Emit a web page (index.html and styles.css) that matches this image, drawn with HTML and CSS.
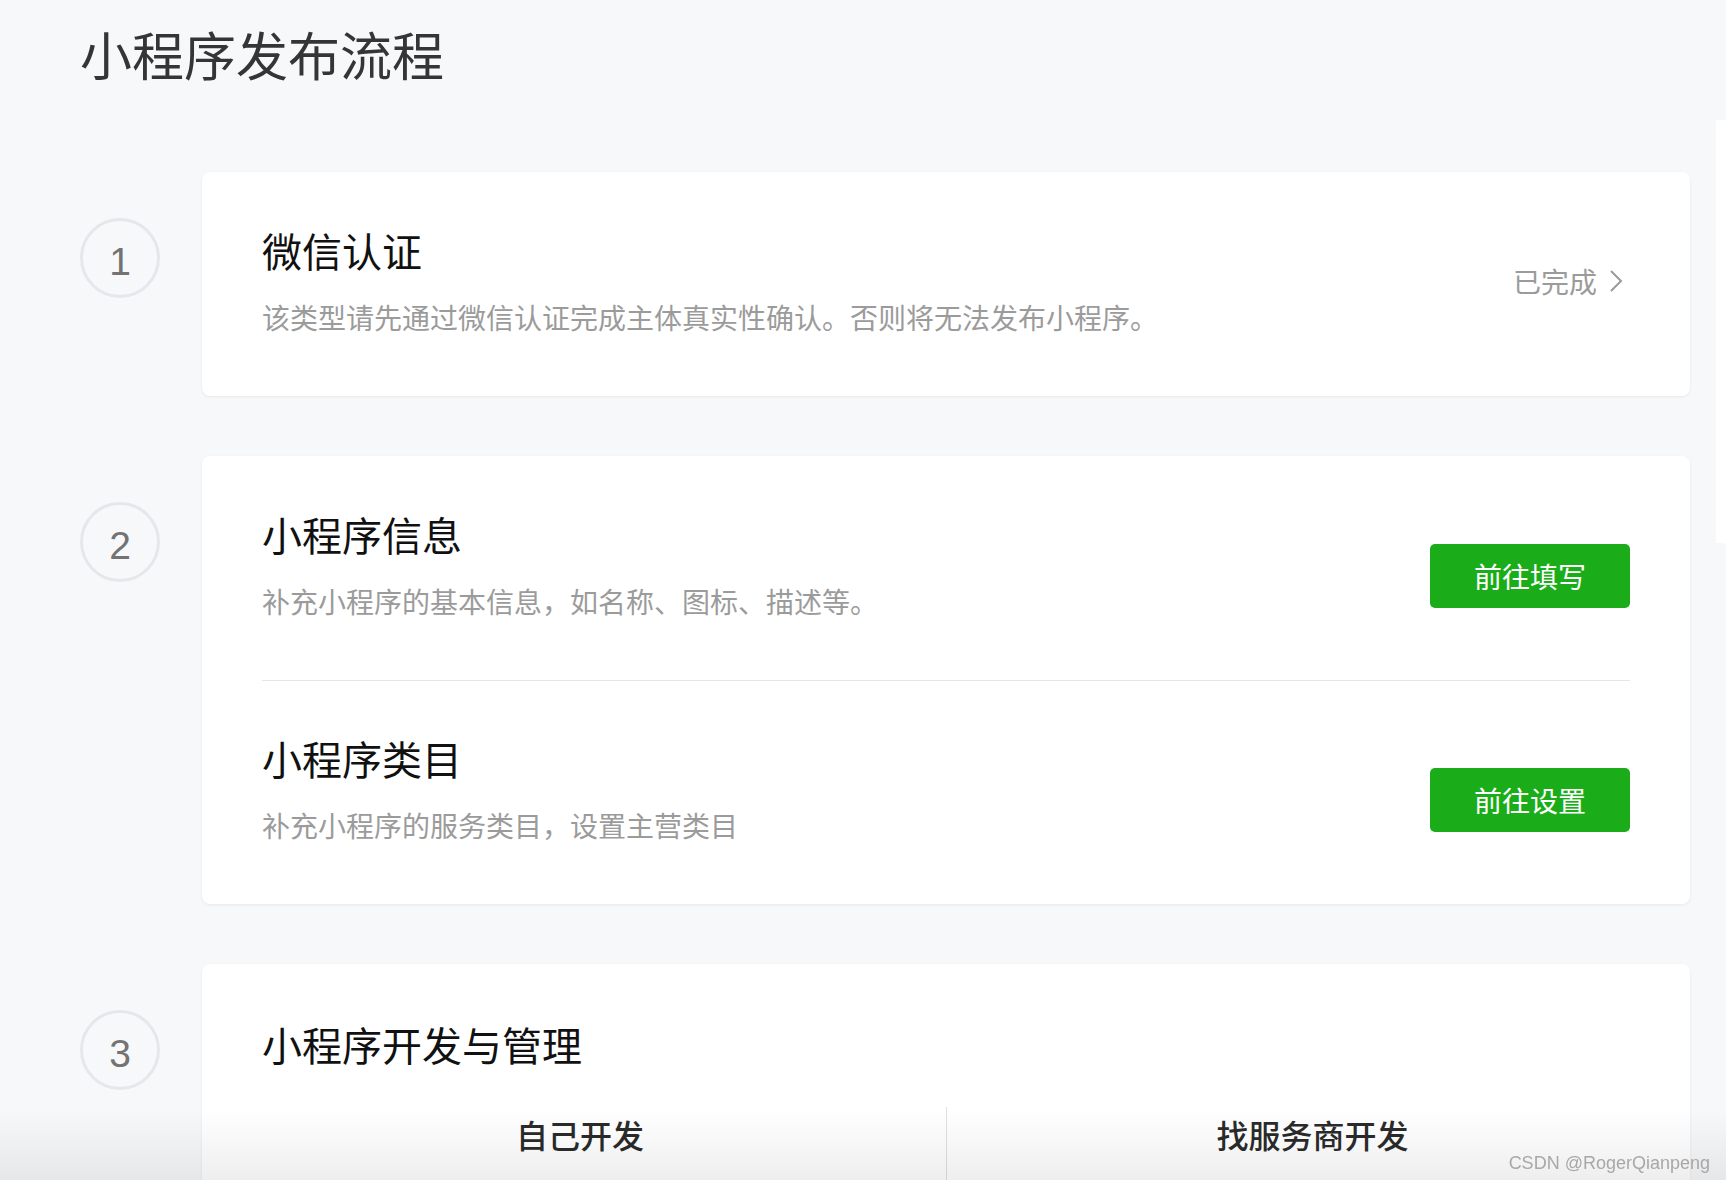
FILE: index.html
```html
<!DOCTYPE html>
<html lang="zh-CN">
<head>
<meta charset="utf-8">
<title>小程序发布流程</title>
<link rel="stylesheet" href="styles.css">
</head>
<body>
<div class="layout">
  <main class="page">
    <h1 class="page-title">小程序发布流程</h1>
    <ol class="steps">
      <li class="step">
        <div class="step-num">1</div>
        <div class="card">
          <div class="section">
            <div class="section-text">
              <h2 class="section-title">微信认证</h2>
              <p class="section-desc">该类型请先通过微信认证完成主体真实性确认。否则将无法发布小程序。</p>
            </div>
            <a class="status-link" href="#">已完成<svg class="chevron" width="14" height="24" viewBox="0 0 14 24"><path d="M2 2 L12 12 L2 22" fill="none" stroke="#9b9b9b" stroke-width="2"/></svg></a>
          </div>
        </div>
      </li>
      <li class="step">
        <div class="step-num">2</div>
        <div class="card">
          <div class="section">
            <div class="section-text">
              <h2 class="section-title">小程序信息</h2>
              <p class="section-desc">补充小程序的基本信息，如名称、图标、描述等。</p>
            </div>
            <a class="btn" href="#">前往填写</a>
          </div>
          <div class="section">
            <div class="section-text">
              <h2 class="section-title">小程序类目</h2>
              <p class="section-desc">补充小程序的服务类目，设置主营类目</p>
            </div>
            <a class="btn" href="#">前往设置</a>
          </div>
        </div>
      </li>
      <li class="step">
        <div class="step-num">3</div>
        <div class="card card-dev">
          <h2 class="section-title">小程序开发与管理</h2>
          <div class="dev-options">
            <div class="dev-option">自己开发</div>
            <div class="dev-option">找服务商开发</div>
          </div>
        </div>
      </li>
    </ol>
  </main>
  <aside class="side-strip"></aside>
</div>
<div class="bottom-fade"></div>
<div class="watermark">CSDN @RogerQianpeng</div>
</body>
</html>
```
FILE: styles.css
```css
html, body {
  margin: 0;
  height: 100%;
  overflow: hidden;
}

body {
  background: #f7f8fa;
  font-family: "Noto Sans CJK SC", "Noto Sans", sans-serif;
}

.layout {
  display: flex;
  align-items: flex-start;
}

.page {
  flex: 1;
  min-width: 0;
  padding: 18px 26px 0 80px;
}

.side-strip {
  flex: none;
  width: 10px;
  height: 423px;
  margin-top: 120px;
  background: #ffffff;
}

.page-title {
  margin: 0 0 82px;
  font-size: 52px;
  line-height: 72px;
  font-weight: 400;
  color: #353535;
}

.steps {
  list-style: none;
  margin: 0;
  padding: 0;
  display: flex;
  flex-direction: column;
  gap: 60px;
}

.step {
  display: flex;
  align-items: flex-start;
  gap: 42px;
}

.step-num {
  flex: none;
  box-sizing: border-box;
  width: 80px;
  height: 80px;
  margin-top: 46px;
  padding-top: 7px;
  border: 3px solid #e6e7ea;
  border-radius: 50%;
  display: flex;
  align-items: center;
  justify-content: center;
  font-family: "Liberation Sans", Arial, sans-serif;
  font-size: 39px;
  color: #737373;
}

.card {
  flex: 1;
  min-width: 0;
  background: #ffffff;
  border-radius: 8px;
  box-shadow: 0 1px 3px rgba(0, 0, 0, 0.07);
  padding: 0 60px;
}

.section {
  display: flex;
  justify-content: space-between;
  align-items: flex-start;
  padding: 50px 0 59px;
}

.section + .section {
  border-top: 1px solid #e6e6e6;
  padding-top: 49px;
}

.section-title {
  margin: 0;
  font-size: 40px;
  line-height: 56px;
  font-weight: 400;
  color: #111111;
}

.section-desc {
  margin: 19px 0 0;
  font-size: 28px;
  line-height: 40px;
  color: #9b9b9b;
}

.btn {
  flex: none;
  margin-top: 38px;
  width: 200px;
  height: 64px;
  display: flex;
  align-items: center;
  justify-content: center;
  background: #1aad19;
  color: #ffffff;
  border-radius: 5px;
  font-size: 28px;
  text-decoration: none;
}

.status-link {
  flex: none;
  margin-top: 39px;
  margin-right: 7px;
  display: flex;
  align-items: center;
  font-size: 28px;
  line-height: 40px;
  color: #9b9b9b;
  text-decoration: none;
}

.chevron {
  margin-left: 12px;
}

.card-dev {
  padding-top: 52px;
}

.dev-options {
  display: grid;
  grid-template-columns: 1fr 1fr;
  margin: 35px -48px 0;
}

.dev-option {
  height: 260px;
  padding-top: 5px;
  text-align: center;
  font-size: 32px;
  line-height: 44px;
  font-weight: 500;
  color: #2b2b2b;
}

.dev-option + .dev-option {
  border-left: 1px solid #e0e0e0;
}

.bottom-fade {
  position: fixed;
  left: 0;
  right: 0;
  bottom: 0;
  height: 70px;
  background: linear-gradient(to bottom, rgba(0, 0, 0, 0), rgba(0, 0, 0, 0.065));
  pointer-events: none;
}

.watermark {
  position: fixed;
  right: 16px;
  bottom: 7px;
  font-family: "Liberation Sans", Arial, sans-serif;
  font-size: 18px;
  line-height: 20px;
  color: #a8a8a8;
  pointer-events: none;
}
```
